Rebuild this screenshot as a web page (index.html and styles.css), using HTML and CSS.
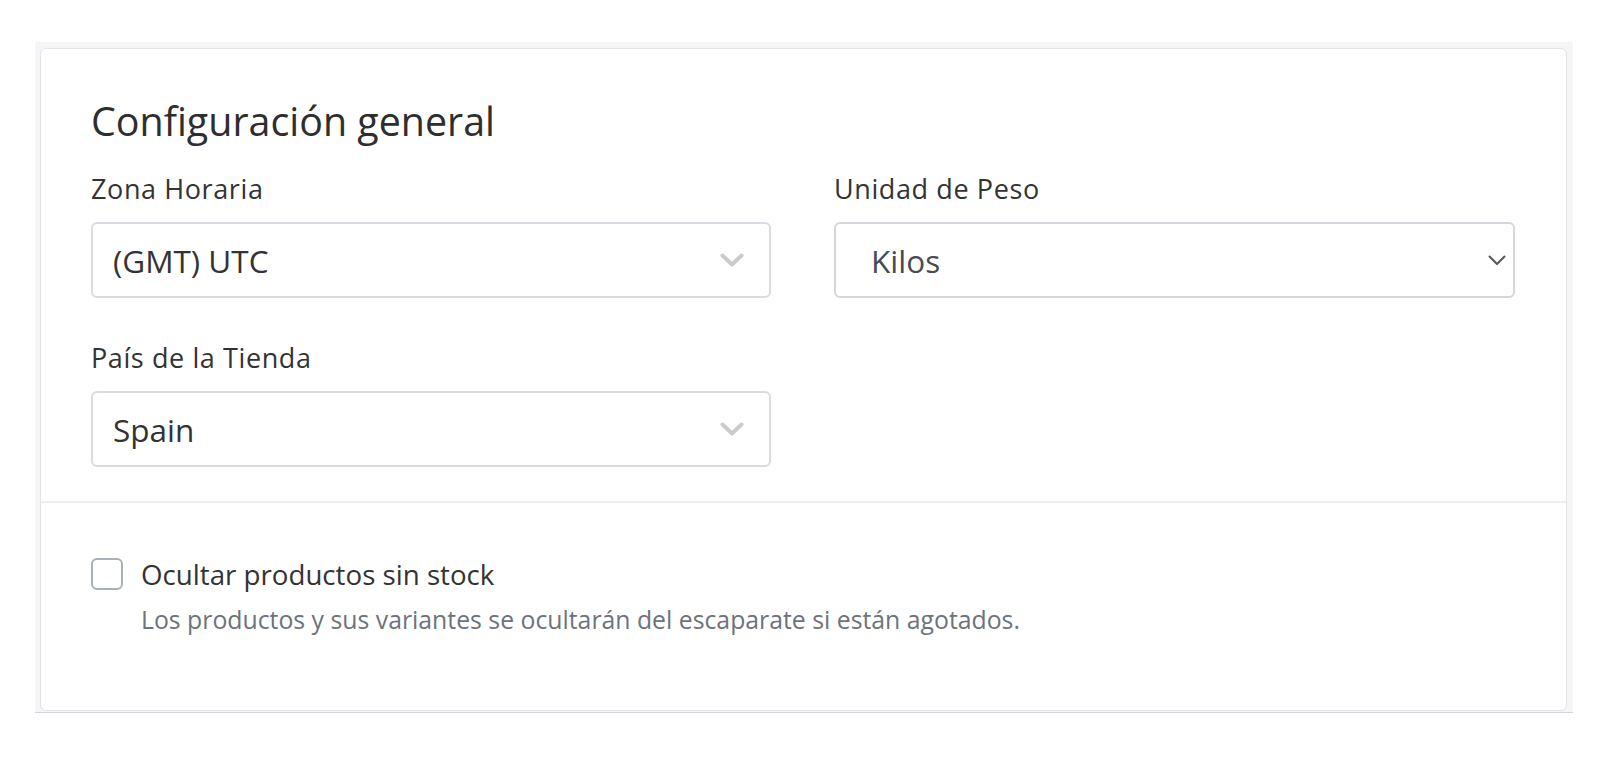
FILE: index.html
```html
<!DOCTYPE html>
<html lang="es">
<head>
<meta charset="utf-8">
<title>Configuración general</title>
<link rel="stylesheet" href="styles.css">
</head>
<body>
<div class="wrap">
  <div class="card">
    <section class="general">
      <h2 class="title">Configuración general</h2>
      <div class="grid">
        <div class="field">
          <label class="label">Zona Horaria</label>
          <div class="select">
            <span class="value">(GMT) UTC</span>
            <svg class="chev chev-light" width="24" height="15" viewBox="0 0 24 15"><path d="M2.5 2.5 L12 11.5 L21.5 2.5" fill="none" stroke="#cbcbcb" stroke-width="4" stroke-linecap="round" stroke-linejoin="round"/></svg>
          </div>
        </div>
        <div class="field">
          <label class="label">Unidad de Peso</label>
          <div class="select select-native">
            <span class="value value-native">Kilos</span>
            <svg class="chev chev-dark" width="18" height="11" viewBox="0 0 18 11"><path d="M1.5 1.5 L9 9 L16.5 1.5" fill="none" stroke="#555" stroke-width="2" stroke-linecap="round" stroke-linejoin="round"/></svg>
          </div>
        </div>
        <div class="field">
          <label class="label">País de la Tienda</label>
          <div class="select">
            <span class="value">Spain</span>
            <svg class="chev chev-light" width="24" height="15" viewBox="0 0 24 15"><path d="M2.5 2.5 L12 11.5 L21.5 2.5" fill="none" stroke="#cbcbcb" stroke-width="4" stroke-linecap="round" stroke-linejoin="round"/></svg>
          </div>
        </div>
      </div>
    </section>
    <section class="stock">
      <div class="check-row">
        <span class="checkbox"></span>
        <span class="check-label">Ocultar productos sin stock</span>
      </div>
      <p class="help">Los productos y sus variantes se ocultarán del escaparate si están agotados.</p>
    </section>
  </div>
</div>
</body>
</html>
```

FILE: styles.css
```css
* { box-sizing: border-box; }

html, body {
  margin: 0;
  padding: 0;
  background: #ffffff;
}

body {
  font-family: "Open Sans", Lato, sans-serif;
  color: #333333;
}

.wrap {
  margin: 42px 0 0 35px;
  width: 1538px;
  background: #f4f5f7;
  padding: 6px 6px 1px 5px;
  border-bottom: 1px solid #d2d4d8;
}

.card {
  background: #ffffff;
  border: 1px solid #e2e4e8;
  border-radius: 6px;
}

.general {
  padding: 48px 51px 34px 50px;
  border-bottom: 2px solid #eceef1;
}

.title {
  margin: 0;
  font-size: 39.4px;
  line-height: 48px;
  font-weight: 400;
  color: #2e2e2e;
}

.grid {
  display: grid;
  grid-template-columns: 680px 681px;
  column-gap: 63px;
  row-gap: 44px;
  margin-top: 28px;
}

.field {
  display: flex;
  flex-direction: column;
}

.label {
  font-size: 27px;
  line-height: 32px;
  letter-spacing: 0.6px;
  color: #333333;
  margin-bottom: 17px;
}

.select {
  height: 76px;
  border: 2px solid #d9dce0;
  border-radius: 6px;
  display: flex;
  align-items: center;
  justify-content: space-between;
  padding: 0 25px 0 20px;
}

.select-native {
  border-color: #d3d6da;
  padding: 0 7px 0 35px;
}

.value {
  font-size: 31.5px;
  color: #333333;
}

.value-native {
  color: #474c52;
}

.stock {
  padding: 55px 51px 76px 50px;
}

.check-row {
  display: flex;
  align-items: center;
  gap: 18px;
}

.checkbox {
  width: 32px;
  height: 32px;
  border: 2px solid #a9b0b9;
  border-radius: 6px;
  background: #ffffff;
  flex: none;
}

.check-label {
  font-size: 27.7px;
  line-height: 32px;
  color: #333333;
}

.help {
  margin: 14px 0 0 50px;
  font-size: 24.8px;
  line-height: 30px;
  color: #6c737c;
}
```
